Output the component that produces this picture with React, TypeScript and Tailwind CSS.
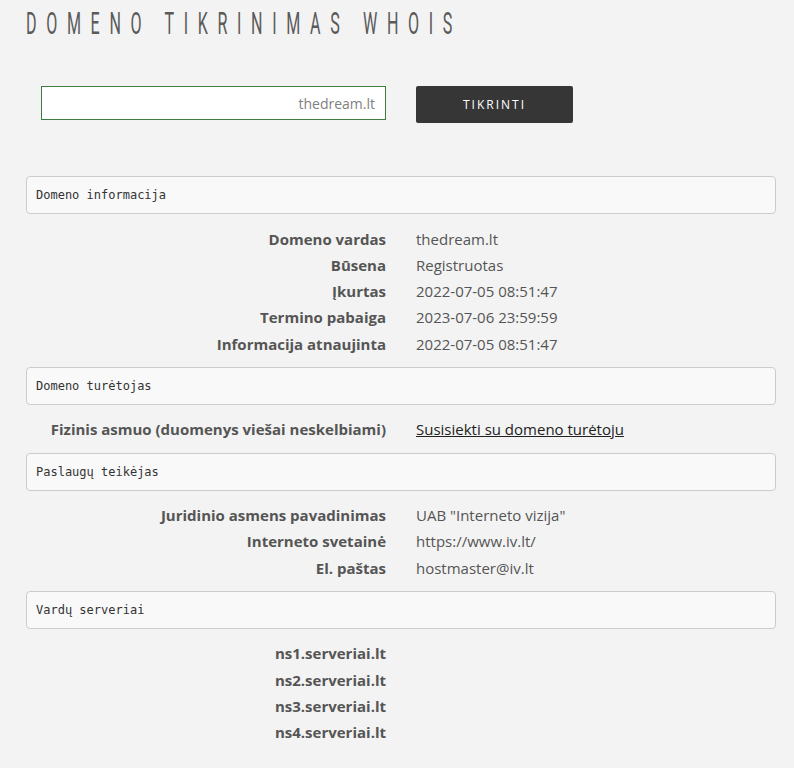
import React from "react";

type Row = { label: string; value?: React.ReactNode };

function Header({ title }: { title: string }) {
  return (
    <div className="h-[38px] flex items-center pl-[9px] border border-[#cccccc] rounded-[4px] bg-[#f9f9f9] text-[12px] text-[#333] [font-family:'DejaVu_Sans_Mono',monospace]">
      {title}
    </div>
  );
}

function Rows({ rows }: { rows: Row[] }) {
  return (
    <div className="mt-[11.5px] mb-[10px]">
      {rows.map((r, i) => (
        <div key={i} className="grid grid-cols-2 h-[26.25px] items-center text-[15px] leading-[26.25px] text-[#555]">
          <div className="px-[15px] text-right font-bold">{r.label}</div>
          <div className="px-[15px]">{r.value}</div>
        </div>
      ))}
    </div>
  );
}

export default function App() {
  return (
    <div className="min-h-screen bg-[#f3f3f3] [font-family:'Open_Sans',sans-serif] overflow-hidden">
      <div className="ml-[26px] w-[750px] pb-6">
        <h1 className="h-[46px] pt-[2px] overflow-hidden whitespace-nowrap">
          <span className="inline-block origin-left scale-x-[0.52] text-[31px] leading-[44px] font-normal tracking-[18.5px] text-[#5a5a5a] [font-family:Roboto,sans-serif]">
            DOMENO TIKRINIMAS WHOIS
          </span>
        </h1>
        <div className="grid grid-cols-2 mt-[40px]">
          <div className="px-[15px]">
            <div className="h-[34px] bg-white border border-[#3f7d3f] flex items-center justify-end pr-[10px] text-[14px] text-[#808080]">
              thedream.lt
            </div>
          </div>
          <div className="px-[15px]">
            <button className="w-[157px] h-[37px] bg-[#363636] rounded-[2px] text-white text-[12px] font-medium tracking-[2px]">
              TIKRINTI
            </button>
          </div>
        </div>
        <div className="mt-[53px]">
          <Header title="Domeno informacija" />
          <Rows
            rows={[
              { label: "Domeno vardas", value: "thedream.lt" },
              { label: "Būsena", value: "Registruotas" },
              { label: "Įkurtas", value: "2022-07-05 08:51:47" },
              { label: "Termino pabaiga", value: "2023-07-06 23:59:59" },
              { label: "Informacija atnaujinta", value: "2022-07-05 08:51:47" },
            ]}
          />
          <Header title="Domeno turėtojas" />
          <Rows
            rows={[
              {
                label: "Fizinis asmuo (duomenys viešai neskelbiami)",
                value: <a className="underline text-[#222]">Susisiekti su domeno turėtoju</a>,
              },
            ]}
          />
          <Header title="Paslaugų teikėjas" />
          <Rows
            rows={[
              { label: "Juridinio asmens pavadinimas", value: 'UAB "Interneto vizija"' },
              { label: "Interneto svetainė", value: "https://www.iv.lt/" },
              { label: "El. paštas", value: "hostmaster@iv.lt" },
            ]}
          />
          <Header title="Vardų serveriai" />
          <Rows
            rows={[
              { label: "ns1.serveriai.lt" },
              { label: "ns2.serveriai.lt" },
              { label: "ns3.serveriai.lt" },
              { label: "ns4.serveriai.lt" },
            ]}
          />
        </div>
      </div>
    </div>
  );
}
